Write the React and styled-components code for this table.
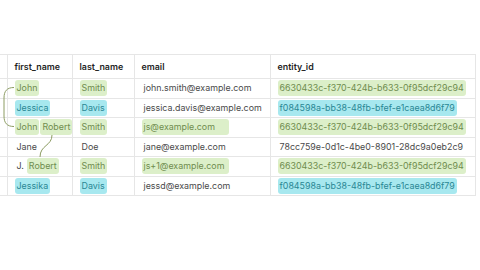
import React from "react";
import styled, { createGlobalStyle } from "styled-components";

const Global = createGlobalStyle`
  html, body { margin: 0; padding: 0; background: #ffffff; }
  body { font-family: Inter, "Noto Sans", sans-serif; }
`;

const Page = styled.div`
  position: relative;
  width: 480px;
  height: 270px;
  padding-top: 54px;
  box-sizing: border-box;
  overflow: hidden;
`;

const Table = styled.table`
  border-collapse: collapse;
  table-layout: fixed;
  width: 475px;
  font-size: 8.9px;
  color: #4a4a4a;
`;

const Th = styled.th`
  height: 23px;
  padding: 0 7px;
  text-align: left;
  font-weight: 600;
  color: #1f1f1f;
  border: 1px solid #e6e6e6;
  border-left: ${(p) => (p.$first ? "none" : "1px solid #e6e6e6")};
  white-space: nowrap;
`;

const Td = styled.td`
  height: 19.5px;
  padding: 0 7px;
  border: 1px solid #e6e6e6;
  border-left: ${(p) => (p.$first ? "none" : "1px solid #e6e6e6")};
  white-space: nowrap;
  box-sizing: border-box;
`;

const Cells = styled.div`
  display: flex;
  align-items: center;
  gap: 1px;
`;

const Plain = styled.span`
  display: inline-block;
  padding: 0 2px;
  line-height: 16px;
`;

const Chip = styled.span`
  display: inline-block;
  padding: 0 2px;
  line-height: 16px;
  border-radius: 3px;
  background: ${(p) => (p.$tone === "cyan" ? "#a7e8ef" : "#dcefc9")};
  color: ${(p) => (p.$tone === "cyan" ? "#2a8794" : "#6f8c4e")};
  width: ${(p) => (p.$w ? `${p.$w}px` : "auto")};
`;

const Connectors = styled.svg`
  position: absolute;
  left: 0;
  top: 0;
  pointer-events: none;
`;

const rows = [
  { first: [["g", "John"]], last: ["g", "Smith"], email: ["", "john.smith@example.com"], id: ["g", "6630433c-f370-424b-b633-0f95dcf29c94"] },
  { first: [["c", "Jessica"]], last: ["c", "Davis"], email: ["", "jessica.davis@example.com"], id: ["c", "f084598a-bb38-48fb-bfef-e1caea8d6f79"] },
  { first: [["g", "John"], ["g", "Robert"]], last: ["g", "Smith"], email: ["g", "js@example.com", 83], id: ["g", "6630433c-f370-424b-b633-0f95dcf29c94"] },
  { first: [["", "Jane"]], last: ["", "Doe"], email: ["", "jane@example.com"], id: ["", "78cc759e-0d1c-4be0-8901-28dc9a0eb2c9"] },
  { first: [["", "J."], ["g", "Robert"]], last: ["g", "Smith"], email: ["g", "js+1@example.com", 83], id: ["g", "6630433c-f370-424b-b633-0f95dcf29c94"] },
  { first: [["c", "Jessika"]], last: ["c", "Davis"], email: ["", "jessd@example.com"], id: ["c", "f084598a-bb38-48fb-bfef-e1caea8d6f79"] },
];

function Value({ v }) {
  const [tone, text, w] = v;
  if (!tone) return <Plain>{text}</Plain>;
  return (
    <Chip $tone={tone === "c" ? "cyan" : "green"} $w={w}>
      {text}
    </Chip>
  );
}

export default function App() {
  return (
    <>
      <Global />
      <Page>
        <Table>
          <colgroup>
            <col style={{ width: 7 }} />
            <col style={{ width: 65 }} />
            <col style={{ width: 62 }} />
            <col style={{ width: 136 }} />
            <col style={{ width: 205 }} />
          </colgroup>
          <thead>
            <tr>
              <Th $first />
              <Th>first_name</Th>
              <Th>last_name</Th>
              <Th>email</Th>
              <Th>entity_id</Th>
            </tr>
          </thead>
          <tbody>
            {rows.map((r, i) => (
              <tr key={i}>
                <Td $first />
                <Td>
                  <Cells>
                    {r.first.map((f, j) => (
                      <Value key={j} v={f} />
                    ))}
                  </Cells>
                </Td>
                <Td>
                  <Cells>
                    <Value v={r.last} />
                  </Cells>
                </Td>
                <Td>
                  <Cells>
                    <Value v={r.email} />
                  </Cells>
                </Td>
                <Td>
                  <Cells>
                    <Value v={r.id} />
                  </Cells>
                </Td>
              </tr>
            ))}
          </tbody>
        </Table>
        <Connectors width="480" height="270" viewBox="0 0 480 270">
          <path
            d="M14 87.5 C 7 87.5, 4 91, 4 98 L 4 116 C 4 123, 7 126.5, 14 126.5"
            fill="none"
            stroke="#8c9c62"
            strokeWidth="1"
          />
          <path
            d="M52 135 C 52 146, 40 145, 40 157"
            fill="none"
            stroke="#8c9c62"
            strokeWidth="1"
          />
        </Connectors>
      </Page>
    </>
  );
}
